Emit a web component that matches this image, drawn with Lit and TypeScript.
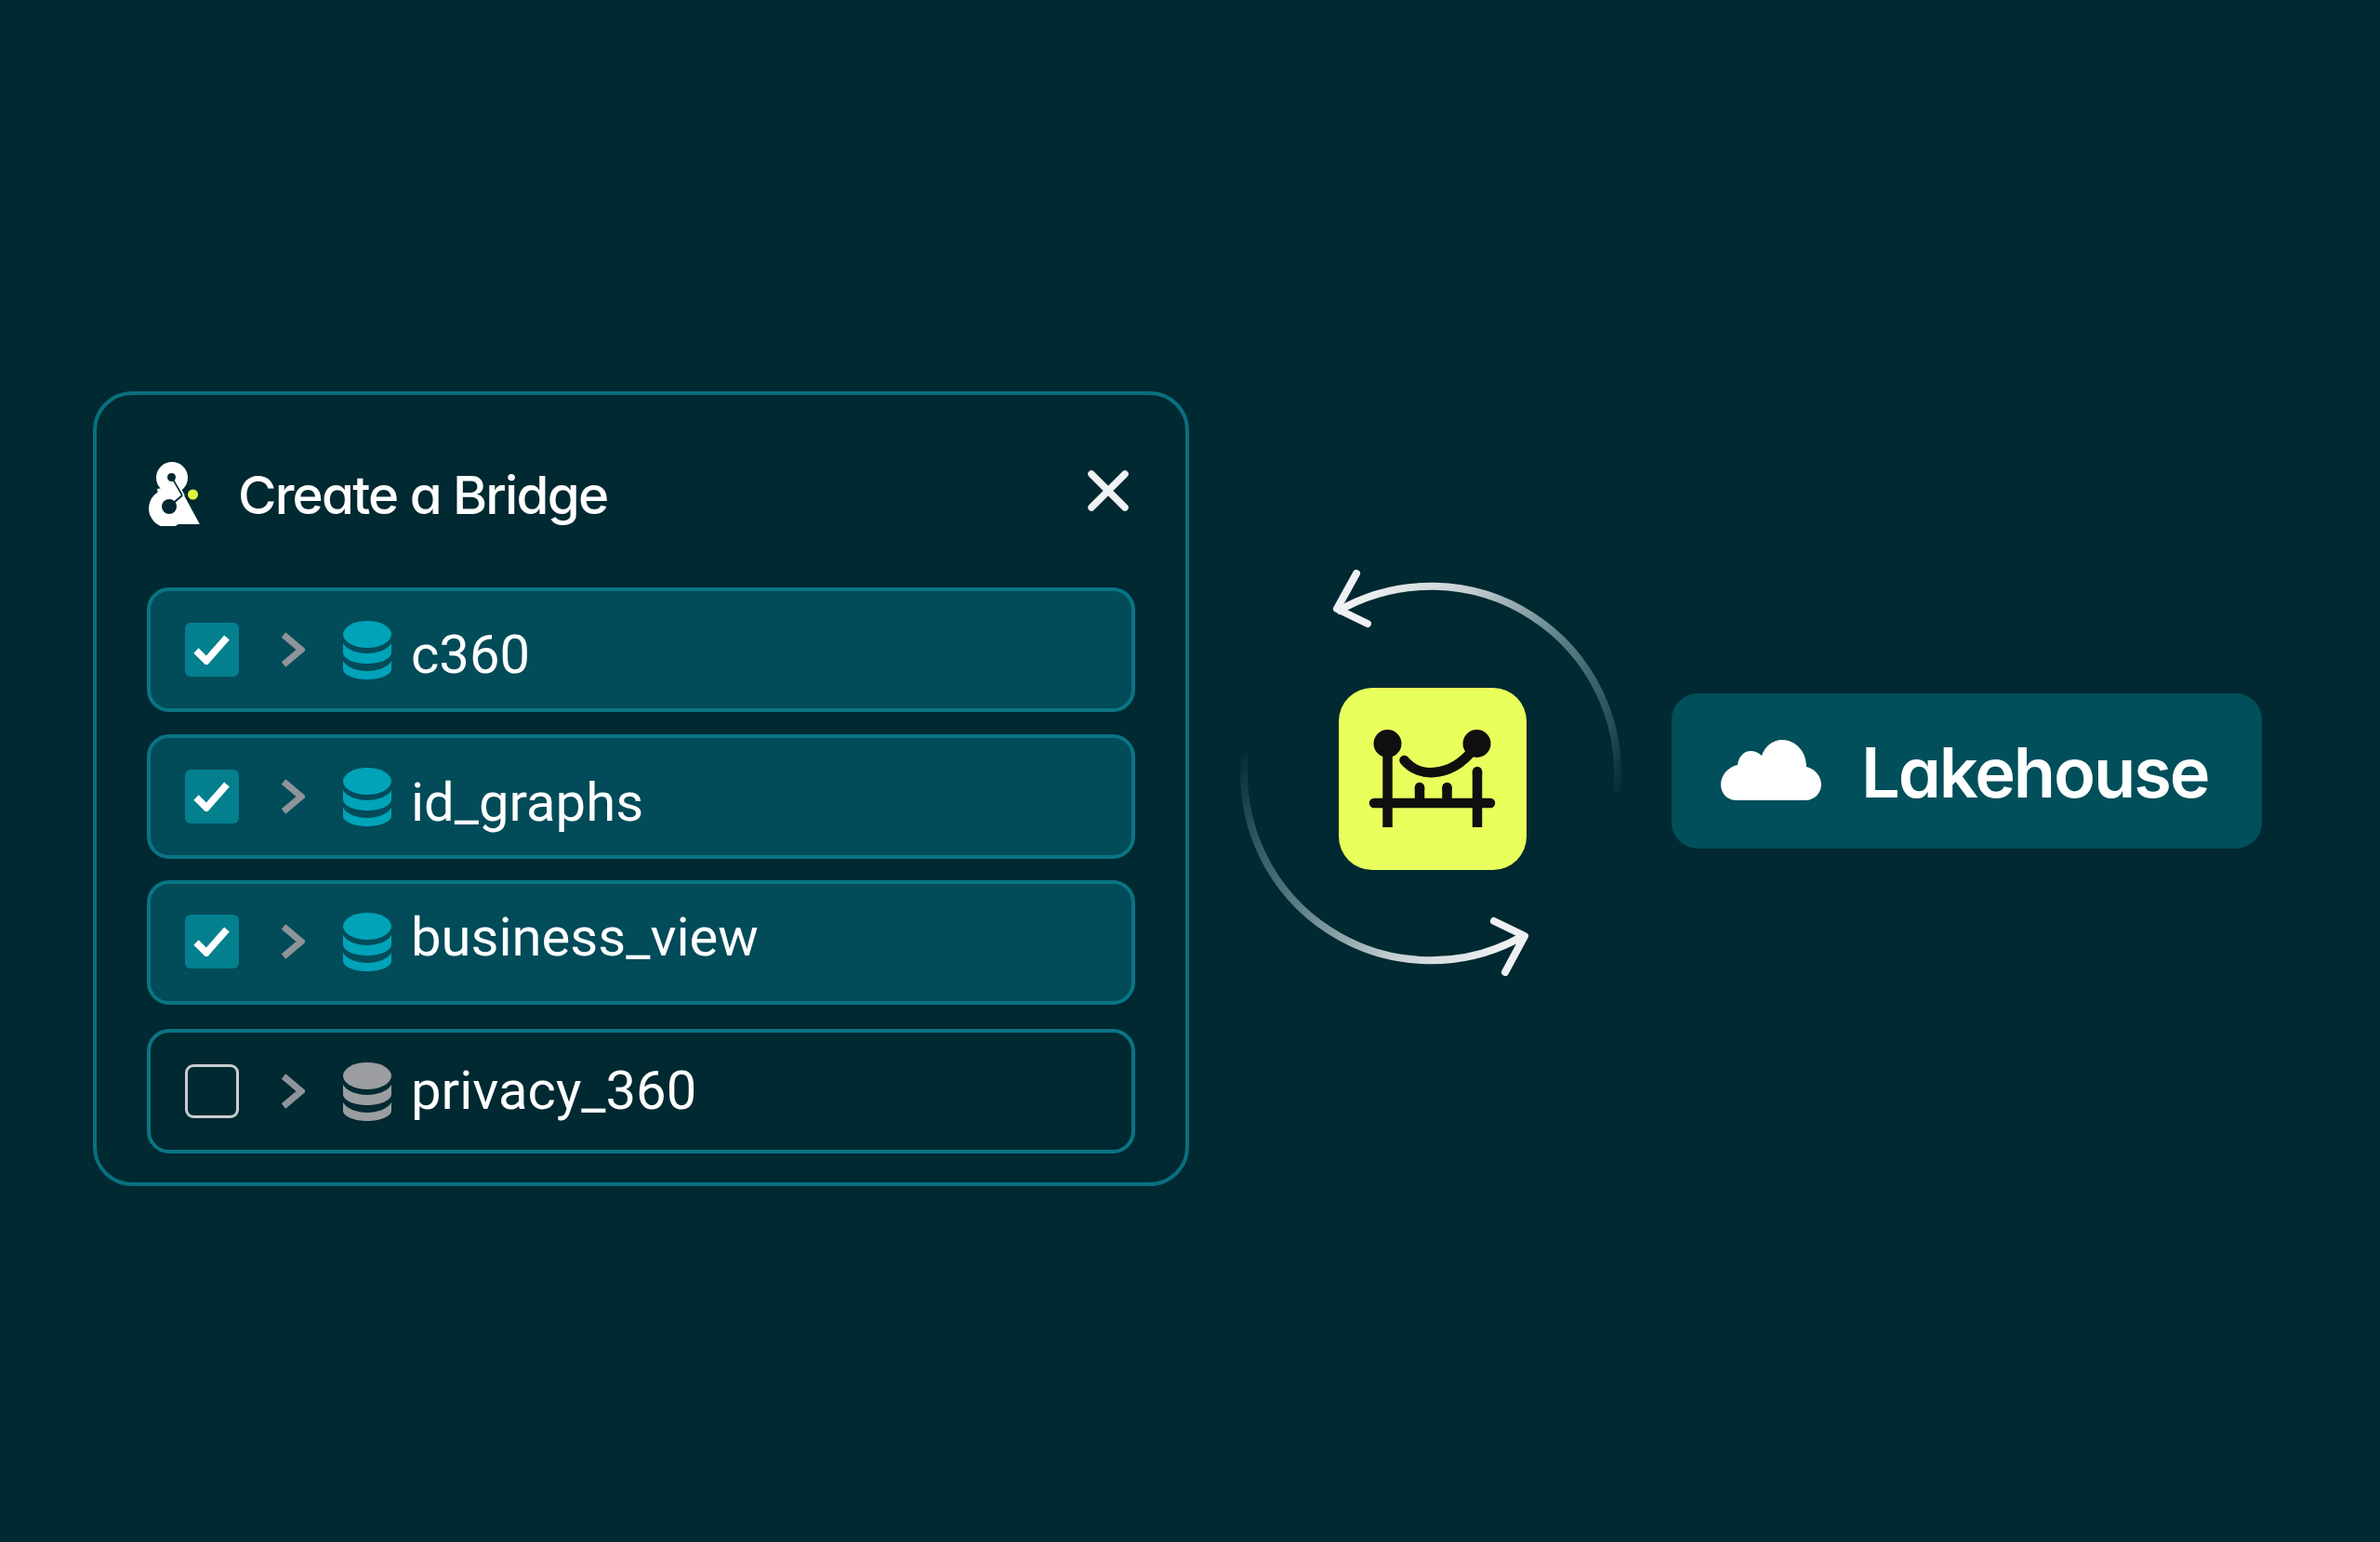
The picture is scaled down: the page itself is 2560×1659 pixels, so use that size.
import { LitElement, html, css, svg } from "lit";
import { customElement } from "lit/decorators.js";

const db = (cls: string) => html`<svg class="db ${cls}" viewBox="0 0 52 63" width="52" height="63">
  <ellipse cx="26" cy="14.5" rx="26" ry="14.5"></ellipse>
  <path d="M0 24C4 31 15 35 26 35C37 35 48 31 52 24V34C52 41 40 46 26 46C12 46 0 41 0 34Z"></path>
  <path d="M0 43C4 50 15 54 26 54C37 54 48 50 52 43V52C52 58 40 63 26 63C12 63 0 58 0 52Z"></path>
</svg>`;

const chevron = html`<svg class="chev" viewBox="0 0 26 38" width="26" height="38"><path d="M3 3L22 19L3 35" fill="none" stroke="#8e9499" stroke-width="7"></path></svg>`;

const rows = [
  { name: "c360", on: true },
  { name: "id_graphs", on: true },
  { name: "business_view", on: true },
  { name: "privacy_360", on: false },
];

@customElement("app-root")
export class AppRoot extends LitElement {
  static styles = css`
    :host { display: block; width: 2560px; height: 1659px; background: #002931; overflow: hidden; }
    .page { display: flex; align-items: flex-start; padding: 421px 0 0 100px; box-sizing: border-box; height: 1659px; }
    .panel { width: 1179px; height: 855px; box-sizing: border-box; border: 4px solid #09707f; border-radius: 42px; padding: 0 54px 0 54px; flex: none; }
    .head { display: flex; align-items: center; height: 207px; box-sizing: border-box; padding-top: 3px; }
    .logo { margin-left: -3px; flex: none; }
    .title { font-family: Inter, "Liberation Sans", sans-serif; font-feature-settings: "cv11"; font-weight: 500; font-size: 56.5px; letter-spacing: -1.8px; color: #fff; margin-left: 35px; flex: 1; padding-top: 4px; white-space: nowrap; }
    .close { flex: none; margin-right: 7px; margin-bottom: 5px; }
    .row { height: 134px; box-sizing: border-box; border: 4px solid #0a7485; border-radius: 24px; background: #024b59; display: flex; align-items: center; padding-left: 37px; }
    .row.off { background: transparent; }
    .r2 { margin-top: 24px; }
    .r3 { margin-top: 23px; }
    .r4 { margin-top: 26px; }
    .box { width: 58px; height: 58px; border-radius: 6px; background: #037f8e; flex: none; display: flex; align-items: center; justify-content: center; box-sizing: border-box; }
    .box.empty { background: transparent; border: 3.500px solid #c8ccd0; border-radius: 9px; }
    .chev { flex: none; margin-left: 45px; }
    .db { flex: none; margin-left: 41px; fill: #00a3b8; }
    .db.grey { fill: #9b9da1; }
    .label { font-family: Roboto, "Liberation Sans", sans-serif; font-size: 58px; color: #fff; margin-left: 21px; white-space: nowrap; }
    .r1 .label { padding-top: 10px; }
    .r2 .label { padding-top: 12px; }
    .r3 .label { padding-bottom: 13px; }
    .r4 .label { padding-bottom: 2px; }
    .r3 .box, .r3 .db, .r3 .chev { margin-bottom: 2px; }
    .swap { position: relative; width: 460px; height: 460px; flex: none; margin: 179px 0 0 21px; }
    .swap > svg { display: block; }
    .tile { position: absolute; left: 140px; top: 140px; width: 202px; height: 196px; border-radius: 36px; background: #e9ff5c; }
    .tile svg { display: block; margin-left: -1px; }
    .card { flex: none; width: 635px; height: 167px; margin: 325px 0 0 38px; border-radius: 28px; background: #014f5a; display: flex; align-items: center; padding-left: 53px; box-sizing: border-box; }
    .card svg { flex: none; margin-top: -2px; }
    .card span { font-family: Inter, "Liberation Sans", sans-serif; font-feature-settings: "cv11"; font-weight: 600; font-size: 74px; letter-spacing: -2.1px; color: #fff; margin-left: 43px; padding-top: 2px; white-space: nowrap; }
  `;

  render() {
    return html`<div class="page">
      <section class="panel">
        <div class="head">
          <svg class="logo" viewBox="0 0 66 72" width="66" height="72">
            <g fill="#fff">
              <circle cx="30" cy="20" r="17"></circle>
              <circle cx="25.5" cy="53" r="20.5"></circle>
              <path d="M14 32L38 28L60 70H38L18 56Z"></path>
            </g>
            <g fill="#002931" stroke="#002931">
              <circle cx="29.5" cy="19.5" r="4.5" stroke="none"></circle>
              <circle cx="27" cy="51" r="8" stroke="none"></circle>
              <path d="M30 20L41 39" stroke-width="1.6" fill="none"></path>
              <path d="M27 51L41 39" stroke-width="2" fill="none"></path>
              <path d="M43 39L60 70L66 40Z" stroke="none"></path>
            </g>
            <circle cx="52.5" cy="38" r="5.5" fill="#e2f23e"></circle>
          </svg>
          <div class="title">Create a Bridge</div>
          <svg class="close" viewBox="0 0 44 44" width="44" height="44"><path d="M4 4L40 40M40 4L4 40" stroke="#eef2f3" stroke-width="7.5" stroke-linecap="round"></path></svg>
        </div>
        ${rows.map((r, i) => html`<div class="row r${i + 1} ${r.on ? "" : "off"}">
          ${r.on
            ? html`<div class="box"><svg viewBox="0 0 40 32" width="40" height="32"><path d="M3 17L14 28L36 3" fill="none" stroke="#fff" stroke-width="7.500"></path></svg></div>`
            : html`<div class="box empty"></div>`}
          ${chevron}
          ${db(r.on ? "" : "grey")}
          <span class="label">${r.name}</span>
        </div>`)}
      </section>
      <div class="swap">
        <svg viewBox="0 0 460 460" width="460" height="460" fill="none">
          <defs>
            <linearGradient id="g1" gradientUnits="userSpaceOnUse" x1="140" y1="50" x2="440" y2="262">
              <stop offset="0" stop-color="#f3f5f6"></stop>
              <stop offset=".28" stop-color="#c6d0d3"></stop>
              <stop offset=".6" stop-color="#5a7e85"></stop>
              <stop offset=".85" stop-color="#245059"></stop>
              <stop offset="1" stop-color="#002931"></stop>
            </linearGradient>
            <linearGradient id="g2" gradientUnits="userSpaceOnUse" x1="340" y1="410" x2="38" y2="200">
              <stop offset="0" stop-color="#f3f5f6"></stop>
              <stop offset=".28" stop-color="#c6d0d3"></stop>
              <stop offset=".6" stop-color="#5a7e85"></stop>
              <stop offset=".85" stop-color="#245059"></stop>
              <stop offset="1" stop-color="#002931"></stop>
            </linearGradient>
          </defs>
          ${svg`<path d="M138 58A201 201 0 0 1 439 252" stroke="url(#g1)" stroke-width="8"></path>
          <path d="M39 212A201 201 0 0 0 340 406" stroke="url(#g2)" stroke-width="8"></path>
          <path d="M159 17L138 55L171 71" stroke="#eef0f3" stroke-width="8" stroke-linecap="round" stroke-linejoin="round"></path>
          <path d="M307 391L340 407L319 446" stroke="#eef0f3" stroke-width="8" stroke-linecap="round" stroke-linejoin="round"></path>`}
        </svg>
        <div class="tile">
          <svg viewBox="0 0 203 196" width="203" height="196" fill="none" stroke="#0f0f0f" stroke-width="10.5">
            <circle cx="53.5" cy="60" r="15" fill="#0f0f0f" stroke="none"></circle>
            <circle cx="149.5" cy="60" r="15" fill="#0f0f0f" stroke="none"></circle>
            <path d="M53.5 60V150"></path>
            <path d="M150 90V150"></path>
            <path d="M150 90V92" stroke-linecap="round"></path>
            <path d="M39 124H164" stroke-linecap="round"></path>
            <path d="M88 107V124M117.500 107V124"></path>
            <path d="M88 107V108M117.500 107V108" stroke-linecap="round"></path>
            <path d="M71.500 78C80 88 92 92 103 91C120 90 135 80 146 66" stroke-linecap="round"></path>
          </svg>
        </div>
      </div>
      <div class="card">
        <svg viewBox="0 0 108 65" width="108" height="65"><path fill="#fff" d="M17 65C6 65 0 57 0 48C0 38 8 29 18 27C19 18 25 12 32 12C37 12 41 14 44 17C47 7 56 0 66 0C80 0 92 12 92 29C101 31 108 39 108 48C108 57 101 65 91 65Z"></path></svg>
        <span>Lakehouse</span>
      </div>
    </div>`;
  }
}
